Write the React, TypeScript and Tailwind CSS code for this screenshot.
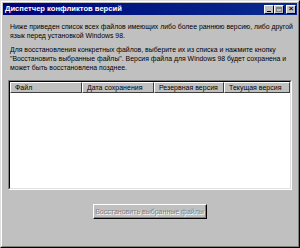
import React from "react";

function TitleButton({ children, className = "" }: { children: React.ReactNode; className?: string }) {
  return (
    <div
      className={
        "w-[10px] h-[9px] bg-[#c0c0c0] border-t border-l border-t-white border-l-white border-r border-b border-r-black border-b-black flex items-center justify-center " +
        className
      }
    >
      {children}
    </div>
  );
}

export default function App() {
  const cols = [
    { label: "Файл", w: "w-[72px]" },
    { label: "Дата сохранения", w: "w-[72px]" },
    { label: "Резервная версия", w: "w-[70px]" },
    { label: "Текущая версия", w: "flex-1" },
  ];

  return (
    <div
      className="w-[300px] h-[248px] bg-[#c0c0c0] border-t border-l border-t-[#dfdfdf] border-l-[#dfdfdf] border-r border-b border-r-black border-b-black flex flex-col overflow-hidden"
      style={{ fontFamily: '"Liberation Sans", Arial, sans-serif' }}
    >
      <div className="flex-1 flex flex-col border-t border-l border-t-white border-l-white border-r border-b border-r-[#808080] border-b-[#808080] p-[1px]">
        {/* title bar */}
        <div className="h-[12px] bg-gradient-to-r from-[#000078] to-[#0c2a90] flex items-center justify-between pl-[2px] pr-[1px]">
          <span className="text-white font-bold text-[7.6px] leading-none">
            Диспетчер конфликтов версий
          </span>
          <div className="flex items-center">
            <TitleButton>
              <div className="w-[4px] h-[1px] bg-black mt-[4px]" />
            </TitleButton>
            <TitleButton>
              <div className="w-[6px] h-[5px] border border-[#808080] border-t-2" />
            </TitleButton>
            <TitleButton className="ml-[2px]">
              <span className="text-[8px] leading-none font-bold text-black">×</span>
            </TitleButton>
          </div>
        </div>

        {/* body */}
        <div className="flex-1 flex flex-col px-[5px] pt-[7px] text-[6.9px] leading-[9px] text-black whitespace-nowrap">
          <p className="pl-[2px]">
            Ниже приведен список всех файлов имеющих либо более раннюю версию, либо другой
            <br />
            язык перед установкой Windows 98.
          </p>
          <p className="pl-[2px] mt-[5px]">
            Для восстановления конкретных файлов, выберите их из списка и нажмите кнопку
            <br />
            "Восстановить выбранные файлы". Версия файла для Windows 98 будет сохранена и
            <br />
            может быть восстановлена позднее.
          </p>

          {/* list box */}
          <div className="mt-[8px] h-[110px] border-t border-l border-t-[#808080] border-l-[#808080] border-r border-b border-r-white border-b-white">
            <div className="h-full border-t border-l border-t-black border-l-black border-r border-b border-r-[#dfdfdf] border-b-[#dfdfdf] bg-white flex flex-col">
              <div className="flex h-[11px]">
                {cols.map((c) => (
                  <div
                    key={c.label}
                    className={
                      c.w +
                      " bg-[#c0c0c0] border-t border-l border-t-white border-l-white border-r border-b border-r-[#404040] border-b-[#404040] pl-[4px] flex items-center text-[7px] leading-none overflow-hidden"
                    }
                  >
                    {c.label}
                  </div>
                ))}
              </div>
            </div>
          </div>

          {/* button */}
          <div className="flex justify-center mt-[14px]">
            <div className="w-[114px] h-[15px] bg-[#c0c0c0] border-t border-l border-t-white border-l-white border-r border-b border-r-black border-b-black">
              <div className="h-full border-r border-b border-r-[#808080] border-b-[#808080] flex items-center justify-center">
                <span className="text-[7px] leading-none text-[#808080] [text-shadow:1px_1px_0_#ffffff]">
                  Восстановить выбранные файлы
                </span>
              </div>
            </div>
          </div>
        </div>
      </div>
    </div>
  );
}
